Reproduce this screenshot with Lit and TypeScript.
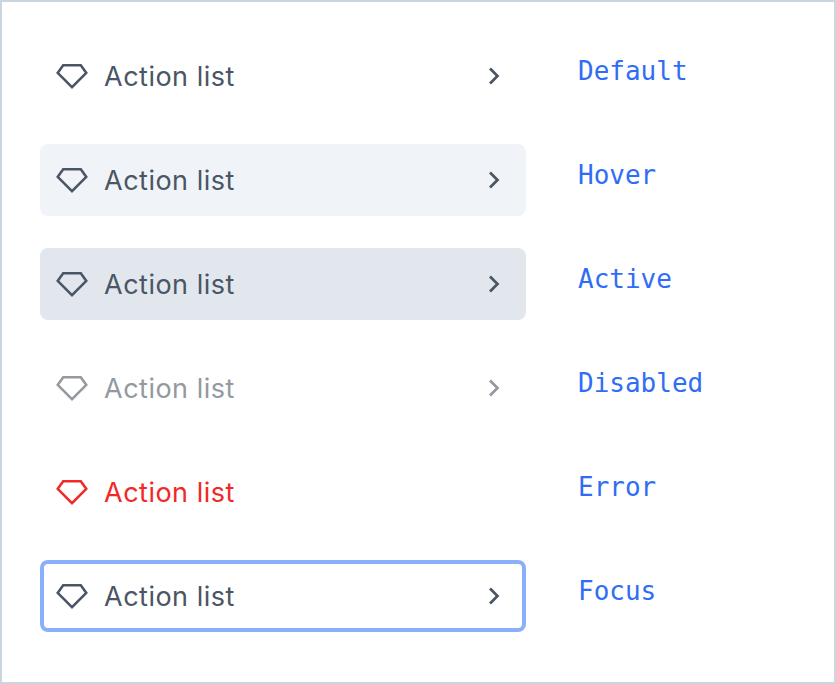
import { LitElement, html, css, nothing } from "lit";
import { customElement, property } from "lit/decorators.js";

@customElement("action-item")
class ActionItem extends LitElement {
  @property({ reflect: true }) state = "default";

  static styles = css`
    :host { display: block; }
    .item {
      display: flex; align-items: center; box-sizing: border-box;
      width: 486px; height: 72px; padding: 0 16px;
      border-radius: 8px; color: #4a5565;
      font: 370 27px/40px Inter, sans-serif;
      font-optical-sizing: none;
      letter-spacing: 0.5px;
    }
    .hover { background: #f0f4f9; }
    .active { background: #e2e7ee; }
    .disabled { color: #94999f; }
    .error { color: #f22828; }
    .focus { box-shadow: inset 0 0 0 4px #8aaffa; }
    .label { margin-left: 16px; padding-top: 2px; flex: 1; white-space: nowrap; }
    svg { display: block; flex: none; fill: none; stroke: currentColor; }
  `;

  render() {
    return html`<div class="item ${this.state}">
      <svg width="32" height="32" viewBox="0 0 32 32" stroke-width="2.5">
        <path d="M7.2 5.3H24.8L30.3 12.9L16 27.2L1.7 12.9Z"></path>
      </svg>
      <span class="label">Action list</span>
      ${this.state === "error" ? nothing : html`<svg width="32" height="32" viewBox="0 0 32 32" stroke-width="2.7">
        <path d="M12 8.5L19.5 16L12 23.5"></path>
      </svg>`}
    </div>`;
  }
}

@customElement("app-root")
class AppRoot extends LitElement {
  static styles = css`
    :host { display: block; }
    .frame {
      box-sizing: border-box; width: 836px; height: 684px;
      border: 2px solid #cbd5e0; background: #fff;
      padding: 38px; display: flex; flex-direction: column; gap: 32px;
    }
    .row { display: flex; gap: 52px; }
    .name {
      color: #2f6df6; margin-top: 15px;
      font: 26px/32px "DejaVu Sans Mono", monospace;
    }
  `;

  render() {
    return html`<div class="frame">
      ${["Default", "Hover", "Active", "Disabled", "Error", "Focus"].map(
        (name) => html`<div class="row">
          <action-item state=${name.toLowerCase()}></action-item>
          <span class="name">${name}</span>
        </div>`
      )}
    </div>`;
  }
}
